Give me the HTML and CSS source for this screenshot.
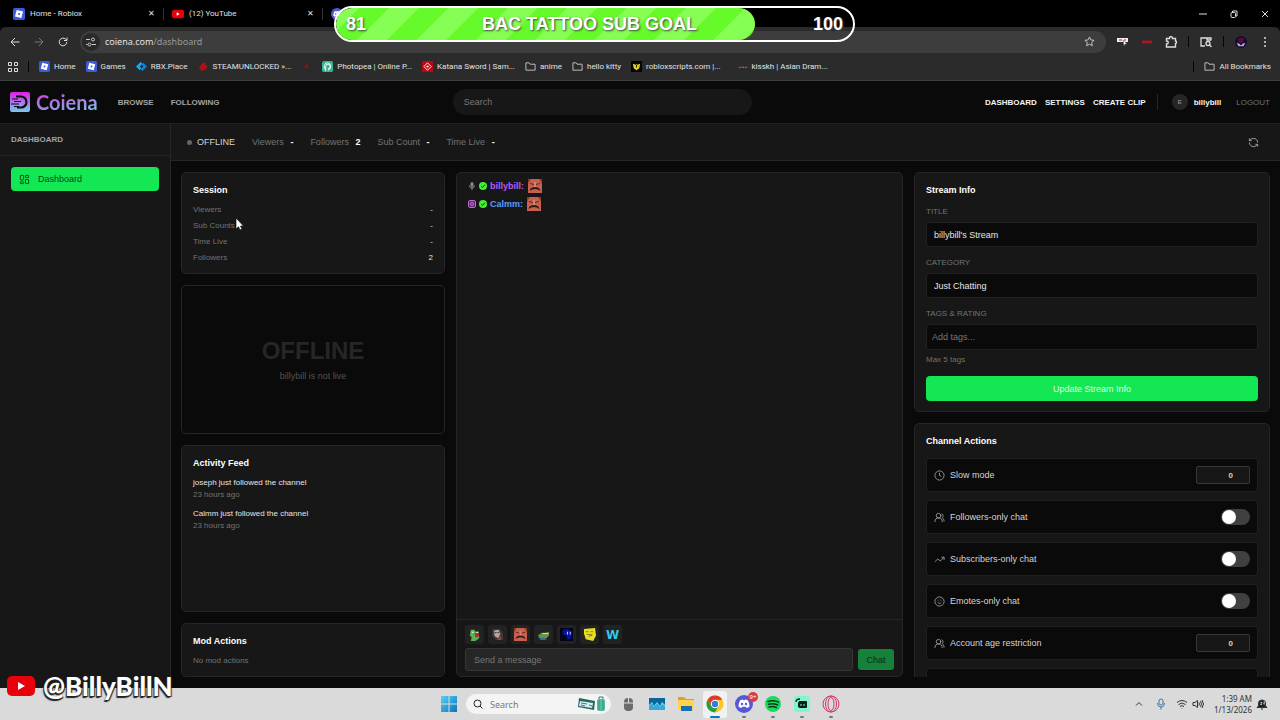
FILE: index.html
```html
<!DOCTYPE html>
<html lang="en">
<head>
  <meta charset="UTF-8">
  <meta name="viewport" content="width=device-width, initial-scale=1.0">
  <title>Coiena - Dashboard</title>
  <link rel="stylesheet" href="styles.css">
</head>
<body>
  <!-- shared icons -->
  <svg class="sprite" aria-hidden="true">
    <symbol id="roblox" viewBox="0 0 12 12"><rect width="12" height="12" rx="2" fill="#3b5be0"/><path d="M3.6 2 10 3.6 8.4 10 2 8.4z" fill="#fff"/><path d="m5.3 4.9 1.8.4-.4 1.8-1.8-.4z" fill="#3b5be0"/></symbol>
    <symbol id="youtube" viewBox="0 0 28 20"><rect width="28" height="20" rx="5" fill="#e8000b"/><path d="M11 6v8l7-4z" fill="#fff"/></symbol>
    <symbol id="folder" viewBox="0 0 12 10" fill="none" stroke="#c8c8c8"><path d="M1 1h3.500l1 1.500H11V9H1z"/></symbol>
    <symbol id="discord" viewBox="0 0 18 18"><circle cx="9" cy="9" r="9" fill="#5557d6"/><path d="M5 5.500q1.500-1 3-1l.4.8h1.200l.4-.8q1.500 0 3 1 1.500 3 1.500 6-1.300 1.300-3 1.500l-.8-1.300H7.300L6.500 13q-1.700-.2-3-1.500 0-3 1.500-6z" fill="#fff"/><circle cx="7" cy="9" r="1.200" fill="#5557d6"/><circle cx="11" cy="9" r="1.200" fill="#5557d6"/></symbol>
    <symbol id="users" viewBox="0 0 24 24" fill="none" stroke="currentColor" stroke-width="2" stroke-linecap="round"><path d="M18 21a8 8 0 0 0-16 0"/><circle cx="10" cy="8" r="5"/><path d="M22 20c0-3.400-2-6.500-4-8a5 5 0 0 0-.5-8.300"/></symbol>
    <symbol id="check" viewBox="0 0 8 8"><circle cx="4" cy="4" r="4" fill="#43ee35"/><path d="M2.200 4.100 3.600 5.400 5.900 2.700" fill="none" stroke="#123d12"/></symbol>
    <symbol id="face" viewBox="0 0 14 14"><path fill="#c8604d" d="M0 0h14v14H0z"/><path fill="#8a3a2f" d="M0 0h3L1 3 0 5zM11 0h3v5l-1-2z"/><path fill="#5b2a23" d="m2 4 4 1v1L2 5zM8 5l4-1v1L8 6z"/><path fill="#dc7f69" d="M6 3h2v5H6z"/><path fill="#2c1413" d="M1.500 12q.5-3 3.500-3.700h4q3 .7 3.500 3.700Q10 10 7 10t-5.500 2z"/></symbol>
  </svg>

  <div class="tab-strip">
    <div class="tab"><svg class="tab-icon"><use href="#roblox"/></svg><span>Home - Roblox</span><button class="tab-close" aria-label="Close tab">✕</button></div>
    <div class="tab"><svg class="tab-icon"><use href="#youtube"/></svg><span>(12) YouTube</span><button class="tab-close" aria-label="Close tab">✕</button></div>
    <div class="tab tab-active"><svg class="tab-icon"><use href="#discord"/></svg></div>
    <div class="window-buttons">
      <button aria-label="Minimize"><svg viewBox="0 0 8 8"><path d="M0 4h8"/></svg></button>
      <button aria-label="Restore"><svg viewBox="0 0 8 8"><rect x="1" y="2.500" width="4.500" height="5" rx="1"/><path d="M2.500 2V1h4.500v5H6"/></svg></button>
      <button aria-label="Close"><svg viewBox="0 0 8 8"><path d="m1 1 6 6M7 1 1 7"/></svg></button>
    </div>
  </div>

  <div class="toolbar">
    <div class="nav-buttons">
      <button aria-label="Back"><svg viewBox="0 0 10 10"><path d="M9.500 5h-8M5 1 1 5l4 4"/></svg></button>
      <button class="muted" aria-label="Forward"><svg viewBox="0 0 10 10"><path d="M.5 5h8M5 1l4 4-4 4"/></svg></button>
      <button aria-label="Reload"><svg viewBox="0 0 10 10"><path d="M8.800 5A3.800 3.800 0 1 1 7.600 2.200L9 3.500M9 .5v3H6"/></svg></button>
    </div>
    <div class="address-bar">
      <span class="site-info"><svg viewBox="0 0 10 10"><path d="M0 2.500h4M0 7.500h1.500M6 7.500h4"/><circle cx="7" cy="2.500" r="1.500"/><circle cx="3.500" cy="7.500" r="1.500"/></svg></span>
      <span class="url">coiena.com<span>/dashboard</span></span>
      <button class="star" aria-label="Bookmark this tab"><svg viewBox="0 0 12 12"><path d="m6 1 1.500 3.300 3.500.4-2.600 2.400.7 3.500L6 8.900l-3.100 1.700.7-3.500L1 4.700l3.500-.4z"/></svg></button>
    </div>
    <div class="extensions">
      <svg viewBox="0 0 12 12"><path d="M0 2h11v4H0z" fill="#eee"/><path d="M2 4h3m2 0h2" stroke="#b01c2e"/><path d="m6 4 4 4H8l-1 2z" fill="#fff" stroke="#555" stroke-width=".5"/></svg>
      <svg viewBox="0 0 12 12"><path d="M1 4.500h10v3H1z" fill="#9c1420"/><path d="M2.500 6h1m2 0h1m2 0h1" stroke="#df2835"/></svg>
      <svg viewBox="0 0 12 12" fill="none" stroke="#ddd" stroke-width="1.400"><path d="M1.500 2.500h3q0-2 1.500-2t1.500 2h3V5q1 0 1 1.200t-1 1.300V11h-9V8q1.800 0 1.800-1.500T1.500 5z"/></svg>
      <i class="divider"></i>
      <svg viewBox="0 0 12 12" fill="none" stroke="#ddd" stroke-width="1.300"><path d="M5 10H1V2h10v2.500M7 2v2h4"/><circle cx="8" cy="7.500" r="2"/><path d="m9.500 9 2 2"/></svg>
      <i class="divider"></i>
      <svg class="profile" viewBox="0 0 14 14"><circle cx="7" cy="7" r="7" fill="#150c35"/><path d="M3 4q4-4 8 0L9 8H5z" fill="#56102e"/><path d="m2 8 3 1 2 2 2-2 3-1-2 4H4z" fill="#bbb0d5"/></svg>
      <svg viewBox="0 0 12 12" fill="#ddd"><circle cx="6" cy="2" r="1"/><circle cx="6" cy="6" r="1"/><circle cx="6" cy="10" r="1"/></svg>
    </div>
  </div>

  <nav class="bookmarks" aria-label="Bookmarks">
    <svg class="apps" viewBox="0 0 10 10"><path d="M.5.5h3v3h-3zM6.500.5h3v3h-3zM.5 6.500h3v3h-3zM6.500 6.500h3v3h-3z"/></svg>
    <i class="divider"></i>
    <a href="#"><svg><use href="#roblox"/></svg>Home</a>
    <a href="#"><svg><use href="#roblox"/></svg>Games</a>
    <a href="#"><svg viewBox="0 0 12 12"><path d="m5 1 2 2-3 3 2 2-2 2-4-4z" fill="#19a9ee"/><path d="m8 2 4 4-5 5-2-2 3-3-2-2z" fill="#1280d8"/></svg>RBX.Place</a>
    <a href="#"><svg viewBox="0 0 12 12"><path d="M4 3 9 1l-1 3 2 1-1 4-5 2-3-4z" fill="#b00f19"/></svg>STEAMUNLOCKED »...</a>
    <a href="#" aria-label="Bookmark"><svg viewBox="0 0 12 12"><path d="m3 9 3-6 3 6-3-3z" fill="#97151b"/></svg></a>
    <a href="#"><svg viewBox="0 0 12 12"><rect width="12" height="12" rx="2" fill="#35b493"/><path d="M4 11V6a2.500 2.500 0 1 1 2.500 2.500M2.500 9V5Q3 2 6 2t3.500 3Q10 9 6.500 10" fill="none" stroke="#fff"/></svg>Photopea | Online P...</a>
    <a href="#"><svg viewBox="0 0 12 12"><path d="M0 0h12v12H0z" fill="#b80813"/><path d="m6 2 4 4-4 4-4-4z" fill="none" stroke="#fff"/><circle cx="6" cy="6" r="1.200" fill="#fff"/></svg>Katana Sword | Sam...</a>
    <a href="#"><svg><use href="#folder"/></svg>anime</a>
    <a href="#"><svg><use href="#folder"/></svg>hello kitty</a>
    <a href="#"><svg viewBox="0 0 12 12"><path d="M0 0h12v12H0z" fill="#050500"/><path d="m2 3 3 1 1-1 1 1 3-1-1 5-3 2-3-2z" fill="#dfd21c"/><path d="M6 4v3" stroke="#000"/></svg>robloxscripts.com |...</a>
    <a href="#" class="kisskh"><svg viewBox="0 0 12 12"><path d="M2 7h2m1 0h3m1 0h2" stroke="#b5622b" stroke-width="1.500"/></svg>kisskh | Asian Dram...</a>
    <i class="divider last"></i>
    <a href="#"><svg><use href="#folder"/></svg>All Bookmarks</a>
  </nav>

  <header class="site-header">
    <nav class="site-nav">
      <a class="logo" href="#">
        <svg viewBox="0 0 20 20"><defs><linearGradient id="brand" x2="0" y2="1"><stop stop-color="#e11ee0"/><stop offset="1" stop-color="#75cce9"/></linearGradient></defs><rect width="20" height="20" rx="2" fill="url(#brand)"/><path d="M6 4.500h5a5.500 5.500 0 0 1 0 11H7" fill="none" stroke="#0b0a12" stroke-width="2.200"/><path d="M2 7h6M4 9.500h7M1 12h8M4 14.500h5" fill="none" stroke="#0b0a12" stroke-width="1.200"/></svg>
        <span>Coiena</span>
      </a>
      <a href="#">BROWSE</a>
      <a href="#">FOLLOWING</a>
    </nav>
    <input class="site-search" type="search" placeholder="Search" aria-label="Search">
    <nav class="account-nav">
      <a href="#">DASHBOARD</a>
      <a href="#">SETTINGS</a>
      <a href="#">CREATE CLIP</a>
      <a class="user" href="#"><span class="avatar">E</span>billybill</a>
      <button class="logout">LOGOUT</button>
    </nav>
  </header>

  <div class="layout">
    <aside class="sidebar">
      <h2>DASHBOARD</h2>
      <a class="side-link" href="#">
        <svg viewBox="0 0 24 24"><rect x="3" y="3" width="7" height="10" rx="1"/><rect x="14" y="3" width="7" height="5" rx="1"/><rect x="14" y="12" width="7" height="9" rx="1"/><rect x="3" y="17" width="7" height="4" rx="1"/></svg>
        Dashboard
      </a>
    </aside>

    <main class="main">
      <div class="stats-bar">
        <span class="status"><i></i>OFFLINE</span>
        <span>Viewers <b>-</b></span>
        <span>Followers <b>2</b></span>
        <span>Sub Count <b>-</b></span>
        <span>Time Live <b>-</b></span>
        <button class="refresh" aria-label="Refresh"><svg viewBox="0 0 24 24"><path d="M21 12A9 9 0 0 0 12 3a10 10 0 0 0-7 3L3 8M3 3v5h5M3 12a9 9 0 0 0 9 9 10 10 0 0 0 7-3l2-2M16 16h5v5"/></svg></button>
      </div>

      <div class="columns">
        <div class="column">
          <section class="card">
            <h3>Session</h3>
            <dl class="session">
              <div><dt>Viewers</dt><dd>-</dd></div>
              <div><dt>Sub Counts</dt><dd>-</dd></div>
              <div><dt>Time Live</dt><dd>-</dd></div>
              <div><dt>Followers</dt><dd>2</dd></div>
            </dl>
          </section>
          <section class="card preview">
            <strong>OFFLINE</strong>
            <p>billybill is not live</p>
          </section>
          <section class="card feed">
            <h3>Activity Feed</h3>
            <ul>
              <li>joseph just followed the channel<time>23 hours ago</time></li>
              <li>Calmm just followed the channel<time>23 hours ago</time></li>
            </ul>
          </section>
          <section class="card">
            <h3>Mod Actions</h3>
            <p class="hint">No mod actions</p>
          </section>
        </div>

        <section class="chat" aria-label="Chat">
          <div class="messages">
            <p class="message purple">
              <svg class="badge" viewBox="0 0 8 8" fill="none" stroke="#8d8d8d"><rect x="3" y=".5" width="2" height="4" rx="1" fill="#8d8d8d"/><path d="M1.500 3.500q0 2.500 2.500 2.500t2.500-2.500M4 6v2"/></svg>
              <svg class="badge"><use href="#check"/></svg>
              <b>billybill:</b>
              <svg class="emote"><use href="#face"/></svg>
            </p>
            <p class="message blue">
              <svg class="badge" viewBox="0 0 8 8" fill="none" stroke="#c267d8"><rect x=".5" y=".5" width="7" height="7" rx="1.500" fill="#472350"/><circle cx="4" cy="4" r="1.900"/><path d="M4 2v4"/></svg>
              <svg class="badge"><use href="#check"/></svg>
              <b>Calmm:</b>
              <svg class="emote"><use href="#face"/></svg>
            </p>
          </div>
          <form class="composer">
            <div class="emotes">
              <button type="button" aria-label="Frog emote"><svg viewBox="0 0 14 14"><path d="M3 2h4l1 2h4l-1 2H8l1 3 3-1v3l-4 3H3l1-4-2-2z" fill="#58b354"/><path d="M7 6h5l-1 4H8z" fill="#c52532"/><path d="M4 4h2v1H4zM9 4h2v1H9z" fill="#fff"/></svg></button>
              <button type="button" aria-label="Portrait emote"><svg viewBox="0 0 14 14"><path d="M2 1h8l3 6v6H5L1 8z" fill="#40383b"/><path d="m3 3 5-1 2 4-2 5-4-2z" fill="#bba7a0"/><path d="M4 5h2m1 0h2" stroke="#202020"/><path d="m8 10 3-1v4H7z" fill="#8f444a"/></svg></button>
              <button type="button" aria-label="Face emote"><svg><use href="#face"/></svg></button>
              <button type="button" aria-label="Lying frog emote"><svg viewBox="0 0 14 14"><path d="m1 8 4-3h4l4-1v4l-3 3H3z" fill="#5f963e"/><path d="m1 9 4 2h6l-2 2H4z" fill="#2977a8"/><path d="M6 6h6" stroke="#e6edd2"/><path d="M7 9h5" stroke="#a47938"/></svg></button>
              <button type="button" aria-label="Blue emote"><svg viewBox="0 0 14 14"><path fill="#03031b" d="M0 0h14v14H0z"/><path d="m3 2 5-1 5 3-1 7-4 2-1-5-4-1z" fill="#0713a5"/><path d="M8 4v3m3-3v3" stroke="#e2e5ff"/></svg></button>
              <button type="button" aria-label="Yellow emote"><svg viewBox="0 0 14 14"><path d="m1 1 12-1 1 8-3 6-8-2-2-6z" fill="#e7df23"/><path d="M3 4h3m2 0h3M4 7h6M6 9l4-1" stroke="#827a13"/></svg></button>
              <button type="button" class="w-emote" aria-label="W emote">W</button>
            </div>
            <div class="send-row">
              <input type="text" placeholder="Send a message" aria-label="Send a message">
              <button type="submit">Chat</button>
            </div>
          </form>
        </section>

        <div class="column right">
          <section class="card">
            <h3>Stream Info</h3>
            <form class="stream-form">
              <label for="title">TITLE</label>
              <input id="title" type="text" value="billybill's Stream">
              <label for="category">CATEGORY</label>
              <input id="category" type="text" value="Just Chatting">
              <label for="tags">TAGS &amp; RATING</label>
              <input id="tags" class="tags" type="text" placeholder="Add tags...">
              <p class="hint">Max 5 tags</p>
              <button type="submit">Update Stream Info</button>
            </form>
          </section>
          <section class="card actions">
            <h3>Channel Actions</h3>
            <label class="action"><svg viewBox="0 0 24 24"><circle cx="12" cy="12" r="10"/><path d="M12 6v6l4 2"/></svg>Slow mode<input type="number" value="0"></label>
            <label class="action"><svg><use href="#users"/></svg>Followers-only chat<input type="checkbox" role="switch"></label>
            <label class="action"><svg viewBox="0 0 24 24"><path d="M16 7h6v6M22 7l-8.500 8.500-5-5L2 17"/></svg>Subscribers-only chat<input type="checkbox" role="switch"></label>
            <label class="action"><svg viewBox="0 0 24 24"><circle cx="12" cy="12" r="10"/><path d="M8 14s1.500 2 4 2 4-2 4-2M9 8v2M15 8v2"/></svg>Emotes-only chat<input type="checkbox" role="switch"></label>
            <label class="action"><svg><use href="#users"/></svg>Account age restriction<input type="number" value="0"></label>
            <div class="action"></div>
          </section>
        </div>
      </div>
    </main>
  </div>

  <footer class="taskbar">
    <div class="task-icons">
      <button class="start" aria-label="Start"><svg viewBox="0 0 16 16"><defs><linearGradient id="win" x2="1" y2="1"><stop stop-color="#58d0f4"/><stop offset="1" stop-color="#0875bd"/></linearGradient></defs><path d="M0 0h7.500v7.500H0zM8.500 0H16v7.500H8.500zM0 8.500h7.500V16H0zM8.500 8.500H16V16H8.500z" fill="url(#win)"/></svg></button>
      <div class="task-search">
        <svg class="lens" viewBox="0 0 10 10"><circle cx="4.500" cy="4.500" r="3.500"/><path d="m7 7 2.500 2.500"/></svg>
        <input type="text" placeholder="Search" aria-label="Search Windows">
        <svg class="luggage" viewBox="0 0 28 16"><path d="m1 2 16 3-1 9-16-3z" fill="#25655f"/><path d="m2 5 13 2-1 5-13-2z" fill="#d8eeee"/><path d="m3 7 6 1m-6 1 4 1m4-1 3 1" stroke="#397ca0"/><path d="M21 3V1h4v2" fill="none" stroke="#357f72"/><rect x="19" y="3" width="8" height="12" rx="2" fill="#56bba1"/><path d="M21 4v10m4-10v10" stroke="#2d9781"/></svg>
      </div>
      <button aria-label="Mouse"><svg viewBox="0 0 18 18"><rect x="5" y="3" width="9" height="13" rx="4" fill="#6b6b6b"/><path d="M5 8h9M9.500 3v5" stroke="#ddd"/></svg></button>
      <button aria-label="Photos"><svg viewBox="0 0 18 18"><path d="M1 3h16v12H1z" fill="#91d3ef"/><path d="M1 3h16v7l-3-3-2 4-3-4-3 4-2-4-3 3z" fill="#08669a"/><path d="m1 11 3-3 2 4 3-4 3 4 2-3 3 2v4H1z" fill="#35a9d9"/></svg></button>
      <button aria-label="File Explorer"><svg viewBox="0 0 18 18"><path d="M1 2h6l2 2h8v11H1z" fill="#dfa21c"/><path d="M1 5h16v10H1z" fill="#ffd34f"/><path d="M4 11h11v5H4z" fill="#1471b6"/></svg></button>
      <button class="current" aria-label="Chrome"><svg viewBox="0 0 18 18"><circle cx="9" cy="9" r="8.500" fill="#f9c921"/><path d="M1.600 4.800A8.500 8.500 0 0 1 16.400 4.800L9 5 5.500 11z" fill="#db3c2c"/><path d="M1.600 4.800A8.500 8.500 0 0 0 9 17.500l3.500-6.500h-7z" fill="#269d4c"/><circle cx="9" cy="9" r="4.200" fill="#fff"/><circle cx="9" cy="9" r="3.200" fill="#3b78d9"/></svg></button>
      <button class="running" aria-label="Discord"><svg><use href="#discord"/></svg><span class="count">9+</span></button>
      <button class="running" aria-label="Spotify"><svg viewBox="0 0 18 18"><circle cx="9" cy="9" r="8" fill="#1fd85e"/><path d="M4 6.500q6-2 10.500.7M4.500 9.300q5-1.500 9 .7M5 12q4-1.200 7.500.7" fill="none" stroke="#09391a" stroke-width="1.500" stroke-linecap="round"/></svg></button>
      <button class="running" aria-label="Streamlabs"><svg viewBox="0 0 18 18"><rect x="1" y="1" width="16" height="16" rx="3" fill="#80f5d2"/><path d="M6 6h7q1 0 1 1v5q0 1-1 1H7q-2 0-2-2V8z" fill="#071d19"/><path d="M3 7q0-3 4-3" fill="none" stroke="#071d19" stroke-width="1.300"/><path d="M8 9v2m3-2v2" stroke="#80f5d2"/></svg></button>
      <button class="running" aria-label="Opera GX"><svg viewBox="0 0 18 18" fill="none" stroke="#d13962"><circle cx="9" cy="9" r="8"/><ellipse cx="9" cy="9" rx="3" ry="6.500"/><ellipse cx="9" cy="9" rx="5.500" ry="8"/></svg></button>
    </div>
    <div class="tray">
      <svg viewBox="0 0 12 12"><path d="m3 7.500 3-3 3 3"/></svg>
      <svg class="mic" viewBox="0 0 12 12"><rect x="4" y="1" width="4" height="6" rx="2"/><path d="M2.500 5q0 4 3.500 4t3.500-4M6 9v2.500"/></svg>
      <svg viewBox="0 0 12 12"><path d="M1 4.500q5-4 10 0M2.500 6.500q3.500-3 7 0M4 8.500q2-1.700 4 0M6 10v.5"/></svg>
      <svg viewBox="0 0 12 12"><path d="M1 4.500h2l2.500-2v7L3 7.500H1zM7 4.500q1 1.500 0 3M8.500 3q2 3 0 6M10 2q3 4 0 8"/></svg>
      <time>1:39 AM<br>1/13/2026</time>
      <svg class="bell" viewBox="0 0 12 12"><path d="M1 9.500 2.500 8V4.500Q3 2 6 2t3.500 2.500V8L11 9.500zM5 11h2" fill="#222"/><path d="M4.500 4.500H6L4.500 6.500H6M7.500 4H9L7.500 6H9" stroke="#eee" stroke-width=".7"/></svg>
    </div>
  </footer>

  <!-- stream overlays -->
  <div class="goal">
    <div class="goal-fill"></div>
    <span>81</span><span>BAC TATTOO SUB GOAL</span><span>100</span>
  </div>
  <div class="handle"><svg><use href="#youtube"/></svg>@BillyBillN</div>
  <svg class="cursor" viewBox="0 0 9 14"><path d="M1 1v11l2.500-2.300L5 13l2-1-1.500-3H8.500z" fill="#fff" stroke="#111" stroke-width=".7"/></svg>
</body>
</html>
```
FILE: styles.css
```css
* {
  margin: 0;
  padding: 0;
  box-sizing: border-box;
}

body {
  display: flex;
  flex-direction: column;
  height: 100vh;
  overflow: hidden;
  position: relative;
  background: #0a0a0a;
  color: #e5e5e5;
  font-family: "Liberation Sans", Arial, sans-serif;
  font-size: 9px;
}

a {
  color: inherit;
  text-decoration: none;
}

button,
input {
  font: inherit;
  color: inherit;
  border: none;
  background: none;
  outline: none;
}

svg {
  display: block;
  flex-shrink: 0;
}

.sprite {
  position: absolute;
  width: 0;
  height: 0;
}

/* Browser window */
.tab-strip,
.toolbar,
.bookmarks {
  display: flex;
  align-items: center;
  flex-shrink: 0;
  font-family: Roboto, "Noto Sans", sans-serif;
  font-size: 8px;
  color: #e2e2e2;
}

.tab-strip {
  height: 27px;
  padding-left: 5px;
  background: #000;
}

.tab {
  display: flex;
  align-items: center;
  gap: 5px;
  width: 159px;
  height: 12px;
  padding: 0 8px;
  border-right: 1px solid #333;
}

.tab-active {
  border: none;
}

.tab-icon {
  width: 12px;
  height: 12px;
}

.tab-close {
  margin-left: auto;
  font-size: 8px;
}

.window-buttons {
  display: flex;
  gap: 23px;
  margin-left: auto;
  margin-right: 11px;
}

.window-buttons svg {
  width: 8px;
  height: 8px;
  fill: none;
  stroke: #ddd;
}

.toolbar {
  height: 29px;
  padding: 0 9px;
  background: #2b2b2b;
  border-radius: 6px 6px 0 0;
}

.nav-buttons {
  display: flex;
  gap: 14px;
  margin: 0 12px 0 1px;
}

.nav-buttons svg {
  width: 10px;
  height: 10px;
  fill: none;
  stroke: #ddd;
}

.nav-buttons .muted svg {
  stroke: #777;
}

.address-bar {
  display: flex;
  align-items: center;
  flex: 1;
  height: 22px;
  padding: 0 11px 0 2px;
  border-radius: 11px;
  background: #3d3d3d;
}

.site-info {
  padding: 4px;
  border-radius: 50%;
  background: #292929;
}

.site-info svg {
  width: 10px;
  height: 10px;
  fill: none;
  stroke: #ccc;
}

.url {
  margin-left: 5px;
  font-family: "Noto Sans", sans-serif;
  font-size: 9px;
}

.url span {
  color: #999;
}

.star {
  margin-left: auto;
}

.star svg {
  width: 11px;
  height: 11px;
  fill: none;
  stroke: #ccc;
}

.extensions {
  display: flex;
  align-items: center;
  gap: 12px;
  margin-left: 11px;
}

.extensions svg {
  width: 12px;
  height: 12px;
}

.extensions .divider {
  margin: 0 -1px;
}

.divider {
  width: 1px;
  height: 11px;
  background: #050505;
}

.bookmarks {
  height: 25px;
  padding: 0 9px 3px 8px;
  gap: 10px;
  background: #2b2b2b;
  border-bottom: 1px solid #3d3d3d;
}

.bookmarks a {
  display: flex;
  align-items: center;
  gap: 4px;
}

.bookmarks svg {
  width: 11px;
  height: 11px;
}

.bookmarks .apps {
  width: 10px;
  height: 10px;
  fill: none;
  stroke: #ddd;
}

.bookmarks .kisskh {
  margin-left: 6px;
}

.bookmarks .last {
  margin-left: auto;
}

/* Site header */
.site-header {
  display: flex;
  align-items: center;
  justify-content: space-between;
  flex-shrink: 0;
  height: 43px;
  padding: 0 10px;
  border-bottom: 1px solid #222;
}

.site-nav,
.account-nav {
  display: flex;
  align-items: center;
  font-size: 8px;
  font-weight: bold;
}

.site-nav {
  gap: 17px;
  color: #a3a3a3;
}

.logo {
  display: flex;
  align-items: center;
  gap: 6px;
  margin-right: 3px;
}

.logo svg {
  width: 20px;
  height: 20px;
}

.logo span {
  font-family: Lato, sans-serif;
  font-size: 20px;
  line-height: 20px;
  background: linear-gradient(170deg, #c454dc 20%, #7cbde9 90%);
  background-clip: text;
  color: transparent;
}

.site-search {
  width: 299px;
  height: 26px;
  padding: 0 11px;
  border-radius: 13px;
  background: #171717;
}

input::placeholder {
  color: #777;
  opacity: 1;
}

.account-nav {
  gap: 8px;
  color: #f5f5f5;
}

.user {
  display: flex;
  align-items: center;
  gap: 6px;
  margin: 0 7px 0 3px;
  padding-left: 14px;
  border-left: 1px solid #262626;
}

.avatar {
  width: 16px;
  border-radius: 50%;
  background: #262626;
  color: #888;
  font-size: 6px;
  line-height: 16px;
  text-align: center;
}

.logout {
  color: #737373;
  font-weight: normal;
}

/* Dashboard */
.layout {
  display: flex;
  flex: 1;
  min-height: 0;
}

.sidebar {
  width: 171px;
  background: #171717;
  border-right: 1px solid #262626;
}

.sidebar h2 {
  height: 32px;
  padding-left: 11px;
  border-bottom: 1px solid #262626;
  color: #a3a3a3;
  font-size: 8px;
  line-height: 31px;
}

.side-link {
  display: flex;
  align-items: center;
  gap: 8px;
  height: 24px;
  margin: 11px;
  padding: 0 8px;
  border-radius: 4px;
  background: #13e854;
  color: #08461c;
}

.side-link svg,
.refresh svg,
.action svg {
  width: 11px;
  height: 11px;
  fill: none;
  stroke: currentColor;
  stroke-width: 2;
}

.main {
  display: flex;
  flex: 1;
  flex-direction: column;
  min-width: 0;
}

.stats-bar {
  display: flex;
  align-items: center;
  gap: 17px;
  height: 37px;
  flex-shrink: 0;
  padding: 0 21px 0 16px;
  background: #171717;
  border-bottom: 1px solid #262626;
  color: #737373;
}

.stats-bar b {
  margin-left: 4px;
  color: #fff;
}

.status {
  display: flex;
  align-items: center;
  gap: 5px;
  color: #d4d4d4;
}

.status i {
  width: 5px;
  height: 5px;
  border-radius: 50%;
  background: #666;
}

.refresh {
  margin-left: auto;
  color: #aaa;
}

.columns {
  display: grid;
  grid-template-columns: 264px 1fr 356px;
  gap: 11px;
  flex: 1;
  min-height: 0;
  padding: 11px 10px;
}

.column {
  display: flex;
  flex-direction: column;
  gap: 11px;
  min-height: 0;
  overflow: hidden;
}

.card,
.chat {
  flex-shrink: 0;
  background: #171717;
  border: 1px solid #262626;
  border-radius: 5px;
}

.card {
  padding: 10px 11px;
}

.card h3 {
  margin-bottom: 8px;
  color: #fff;
  font-size: 9px;
  line-height: 14px;
}

.right h3 {
  margin-bottom: 10px;
}

.session {
  display: grid;
  gap: 6px;
  font-size: 8px;
  line-height: 10px;
}

.session div {
  display: flex;
  justify-content: space-between;
}

.session dt,
.hint {
  color: #737373;
}

.hint {
  font-size: 8px;
  line-height: 10px;
}

.preview {
  display: flex;
  flex-direction: column;
  align-items: center;
  justify-content: center;
  gap: 6px;
  aspect-ratio: 16 / 9;
  background: #0a0a0a;
  color: #525252;
}

.preview strong {
  color: #262626;
  font-size: 24px;
  line-height: 28px;
}

.feed {
  flex: 1;
}

.feed ul {
  display: grid;
  gap: 9px;
  list-style: none;
  font-size: 8px;
  line-height: 10px;
}

.feed time {
  display: block;
  margin-top: 2px;
  color: #737373;
}

.chat {
  display: flex;
  flex-direction: column;
  min-height: 0;
}

.messages {
  flex: 1;
  padding: 4px 11px;
}

.message {
  display: flex;
  align-items: center;
  gap: 3px;
  height: 18px;
}

.badge {
  width: 8px;
  height: 8px;
}

.emote {
  width: 14px;
  height: 14px;
  margin-left: 1px;
}

.purple {
  color: #b35cf0;
}

.blue {
  color: #5a9ff5;
}

.composer {
  padding: 5px 8px;
  border-top: 1px solid #262626;
}

.emotes {
  display: flex;
  gap: 4px;
  margin-bottom: 4px;
}

.emotes button {
  display: grid;
  place-items: center;
  width: 19px;
  height: 19px;
  border-radius: 3px;
  background: #222;
}

.emotes svg {
  width: 13px;
  height: 13px;
}

.emotes .w-emote {
  color: #31c8ec;
  font: bold 12px "DejaVu Sans", sans-serif;
}

.send-row {
  display: flex;
  align-items: center;
  gap: 5px;
}

.send-row input {
  flex: 1;
  height: 23px;
  padding: 0 8px;
  border: 1px solid #363636;
  border-radius: 3px;
  background: #262626;
}

.send-row button {
  width: 36px;
  height: 21px;
  border-radius: 3px;
  background: #15813a;
  color: #062d12;
}

.stream-form {
  display: flex;
  flex-direction: column;
}

.stream-form label {
  margin-bottom: 5px;
  color: #737373;
  font-size: 8px;
  line-height: 10px;
}

.stream-form input {
  height: 25px;
  margin-bottom: 11px;
  padding: 0 7px;
  border: 1px solid #202020;
  border-radius: 4px;
  background: #0a0a0a;
}

.stream-form .tags {
  height: 26px;
  margin-bottom: 5px;
  padding: 0 5px;
}

.stream-form button {
  height: 25px;
  margin-top: 11px;
  border-radius: 4px;
  background: #13e854;
  color: #d9ffe3;
}

.action {
  display: flex;
  align-items: center;
  gap: 5px;
  height: 34px;
  margin-bottom: 8px;
  padding: 0 7px;
  border: 1px solid #1f1f1f;
  border-radius: 4px;
  background: #0a0a0a;
  color: #d4d4d4;
}

.action svg {
  color: #999;
}

.action input {
  margin-left: auto;
}

.action input[type="number"] {
  width: 54px;
  height: 18px;
  padding-right: 16px;
  border: 1px solid #363636;
  border-radius: 2px;
  background: #171717;
  font-weight: bold;
  font-size: 8px;
  text-align: right;
  appearance: textfield;
}

.action input[type="number"]::-webkit-inner-spin-button {
  display: none;
}

.action input[type="checkbox"] {
  appearance: none;
  width: 29px;
  height: 16px;
  padding: 1px;
  border-radius: 8px;
  background: #404040;
}

.action input[type="checkbox"]::before {
  content: "";
  display: block;
  width: 14px;
  height: 14px;
  border-radius: 50%;
  background: #fff;
}

.action input[type="checkbox"]:checked::before {
  margin-left: 13px;
}

/* Taskbar */
.taskbar {
  display: grid;
  grid-template-columns: 1fr auto 1fr;
  align-items: center;
  flex-shrink: 0;
  height: 32px;
  background: #dadada;
  color: #333;
  font-family: "Noto Sans", "Open Sans", sans-serif;
}

.task-icons {
  display: flex;
  grid-column: 2;
  align-items: center;
  gap: 5px;
}

.task-icons button {
  position: relative;
  display: grid;
  place-items: center;
  width: 24px;
  height: 27px;
  border-radius: 3px;
}

.task-icons button svg {
  width: 18px;
  height: 18px;
}

.task-icons .start svg {
  width: 16px;
  height: 16px;
}

.task-icons .current {
  background: #f1f1f1;
}

.current::after,
.running::after {
  content: "";
  position: absolute;
  bottom: 0;
  width: 4px;
  height: 2px;
  border-radius: 1px;
  background: #777;
}

.current::after {
  width: 10px;
  background: #0879bd;
}

.count {
  position: absolute;
  top: 1px;
  right: -2px;
  width: 10px;
  border-radius: 50%;
  background: #d83b45;
  color: #fff;
  font-size: 6px;
  line-height: 10px;
}

.task-search {
  display: flex;
  align-items: center;
  width: 145px;
  height: 20px;
  padding: 0 5px 0 7px;
  border-radius: 10px;
  background: #f4f4f4;
}

.task-search input {
  flex: 1;
  min-width: 0;
  padding-left: 7px;
}

.task-search .lens {
  width: 10px;
  height: 10px;
  fill: none;
  stroke: #222;
}

.task-search .luggage {
  width: 28px;
  height: 16px;
}

.tray {
  display: flex;
  align-items: center;
  justify-content: flex-end;
  gap: 4px;
  padding-right: 12px;
  font-size: 8px;
  line-height: 11px;
  text-align: right;
}

.tray svg {
  width: 12px;
  height: 12px;
  fill: none;
  stroke: #333;
}

.tray .mic {
  margin: 0 5px 0 6px;
  stroke: #4275a8;
}

.tray time {
  margin-left: 6px;
}

/* Stream overlays */
.goal {
  position: absolute;
  top: 6px;
  left: 50%;
  display: flex;
  align-items: center;
  justify-content: space-between;
  width: 521px;
  height: 36px;
  margin-left: -306px;
  padding: 0 10px;
  border: 2px solid #fff;
  border-radius: 18px;
  overflow: hidden;
  color: #fff;
  font-size: 18px;
  font-weight: bold;
  text-shadow: 1px 1px 2px #444;
}

.goal span {
  position: relative;
}

.goal-fill {
  position: absolute;
  inset: 0 auto 0 0;
  width: 81%;
  border-radius: 17px;
  background: repeating-linear-gradient(135deg, #86fe53 0 16px, #66fa2a 17px 37px, #86fe53 38px 42px);
}

.handle {
  position: absolute;
  left: 7px;
  bottom: 18px;
  display: flex;
  align-items: center;
  gap: 8px;
  color: #fff;
  font: 900 26px/32px Lato, sans-serif;
  text-shadow: -1px 2px 1px #222, 1px 1px 1px #222;
}

.handle svg {
  width: 28px;
  height: 20px;
}

.cursor {
  position: absolute;
  top: 217px;
  left: 235px;
  width: 9px;
  height: 14px;
}
```
